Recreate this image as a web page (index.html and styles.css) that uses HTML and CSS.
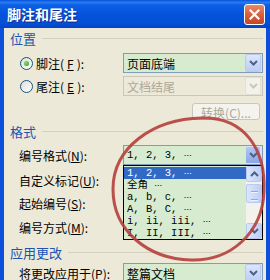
FILE: index.html
```html
<!DOCTYPE html>
<html lang="zh-CN">
<head>
  <meta charset="UTF-8" />
  <title>脚注和尾注</title>
  <link rel="stylesheet" href="styles.css">
</head>
<body>
  <div class="dialog">
    <div class="titlebar">
      <span class="title">脚注和尾注</span>
      <span class="close">
        <svg width="11" height="11" viewBox="0 0 11 11"><path d="M1.5 1.5l8 8M9.5 1.5l-8 8" stroke="#fff" stroke-width="2.2" stroke-linecap="square"/></svg>
      </span>
    </div>

    <div class="content">
      <div class="group first">位置</div>
      <div class="row row-foot">
        <label class="radio"><span class="dot checked"></span>脚注(<u>F</u>):</label>
        <div class="combo">
          <span class="value">页面底端</span>
          <span class="arrow"><svg width="9" height="6" viewBox="0 0 9 6"><path d="M1 1l3.5 3.5L8 1" stroke="#4d6185" stroke-width="2" fill="none"/></svg></span>
        </div>
      </div>
      <div class="row row-end">
        <label class="radio"><span class="dot"></span>尾注(<u>E</u>):</label>
        <div class="combo disabled">
          <span class="value">文档结尾</span>
          <span class="arrow"><svg width="9" height="6" viewBox="0 0 9 6"><path d="M1 1l3.5 3.5L8 1" stroke="#c9c7ba" stroke-width="2" fill="none"/></svg></span>
        </div>
      </div>
      <div class="actions">
        <button class="btn" disabled>转换(<u>C</u>)...</button>
      </div>

      <div class="group">格式</div>
      <div class="row row-format">
        <label>编号格式(<u>N</u>):</label>
        <div class="combo">
          <span class="value num">1, 2, 3, <span class="ell">…</span></span>
          <span class="arrow hot"><svg width="9" height="6" viewBox="0 0 9 6"><path d="M1 1l3.5 3.5L8 1" stroke="#4d6185" stroke-width="2" fill="none"/></svg></span>
        </div>
      </div>
      <div class="row row-custom"><label>自定义标记(<u>U</u>):</label></div>
      <div class="row row-start"><label>起始编号(<u>S</u>):</label></div>
      <div class="row row-mode"><label>编号方式(<u>M</u>):</label></div>

      <div class="group group-apply">应用更改</div>
      <div class="row row-apply">
        <label>将更改应用于(<u>P</u>):</label>
        <div class="combo">
          <span class="value">整篇文档</span>
          <span class="arrow"><svg width="9" height="6" viewBox="0 0 9 6"><path d="M1 1l3.5 3.5L8 1" stroke="#4d6185" stroke-width="2" fill="none"/></svg></span>
        </div>
      </div>
    </div>

    <div class="droplist">
      <ul class="items num">
        <li class="selected">1, 2, 3, <span class="ell">…</span></li>
        <li>全角 <span class="ell">…</span></li>
        <li>a, b, c, <span class="ell">…</span></li>
        <li>A, B, C, <span class="ell">…</span></li>
        <li>i, ii, iii, <span class="ell">…</span></li>
        <li>I, II, III, <span class="ell">…</span></li>
      </ul>
      <div class="scrollbar">
        <span class="sbtn"><svg width="9" height="6" viewBox="0 0 9 6"><path d="M1 5l3.5-3.5L8 5" stroke="#4d6185" stroke-width="2" fill="none"/></svg></span>
        <span class="track"><span class="thumb"></span></span>
        <span class="sbtn"><svg width="9" height="6" viewBox="0 0 9 6"><path d="M1 1l3.5 3.5L8 1" stroke="#4d6185" stroke-width="2" fill="none"/></svg></span>
      </div>
    </div>

    <svg class="mark" width="270" height="280" viewBox="0 0 270 280">
      <path d="M202 118 C245 117 266 150 264 192 C262 233 231 261 191 260 C149 259 113 232 113 189 C113 148 152 119 202 118 Z" fill="none" stroke="#b63f3b" stroke-width="3" stroke-opacity="0.9"/>
    </svg>
  </div>
</body>
</html>
```

FILE: styles.css
```css
body {
  margin: 0;
  font-family: "Noto Sans CJK SC", sans-serif;
  font-size: 12px;
  color: #000;
}
.dialog {
  position: relative;
  width: 270px;
  height: 280px;
  overflow: hidden;
  background: #ece9d8;
}
.titlebar {
  height: 28px;
  display: flex;
  align-items: center;
  justify-content: space-between;
  padding: 0 5px 0 7px;
  background: linear-gradient(to bottom, #0552dc 0%, #2a7cf0 8%, #0d5fe6 18%, #0453dc 50%, #044fd6 85%, #0342c2 100%);
}
.title {
  color: #fff;
  font-weight: bold;
  font-size: 14px;
  text-shadow: 1px 1px #0c2a8c;
}
.close {
  width: 19px;
  height: 19px;
  display: flex;
  align-items: center;
  justify-content: center;
  border: 1px solid #fff;
  border-radius: 3px;
  background: linear-gradient(to bottom, #e9896c, #d8603d 50%, #c2472a);
}
.content {
  height: 252px;
  padding: 2px 3px 0 6px;
  border-left: 4px solid #0b4fdb;
  border-right: 4px solid #0b4fdb;
}
.group {
  height: 15px;
  margin-top: 4px;
  display: flex;
  align-items: center;
  gap: 6px;
  color: #2052b4;
  font-size: 13px;
}
.group::after {
  content: "";
  flex: 1;
  border-top: 1px solid #d3d0c0;
}
.group.first {
  margin-top: 1px;
}
.row {
  height: 20px;
  margin-left: 9px;
  display: grid;
  grid-template-columns: 1fr 140px;
  align-items: center;
}
.row-foot { margin-top: 7px; }
.row-end { margin-top: 3px; }
.row-format { margin-top: 6px; }
.row-custom { margin-top: 5px; }
.row-start { margin-top: 3px; }
.row-mode { margin-top: 4px; }
.group-apply { margin-top: 8px; }
.row-apply { margin-top: 3px; }

.radio {
  display: flex;
  align-items: center;
  gap: 3px;
}
.dot {
  width: 11px;
  height: 11px;
  margin-left: 1px;
  border: 1px solid #1c5180;
  border-radius: 50%;
  background: linear-gradient(135deg, #dcdcd7, #ffffff);
  display: flex;
  align-items: center;
  justify-content: center;
}
.dot.checked::after {
  content: "";
  width: 5px;
  height: 5px;
  border-radius: 50%;
  background: radial-gradient(circle at 35% 35%, #7ee07a, #21a121);
}
.combo {
  height: 20px;
  box-sizing: border-box;
  border: 1px solid #7f9db9;
  background: #d6ebd0;
  display: flex;
  align-items: center;
  justify-content: space-between;
  padding: 0 1px 0 3px;
}
.combo.disabled {
  background: #ece9d8;
  border-color: #c9c7ba;
  color: #aca899;
}
.arrow {
  width: 14px;
  height: 16px;
  border: 1px solid #b9caf1;
  border-radius: 2px;
  background: linear-gradient(to bottom, #dce6fc, #bccdf6);
  display: flex;
  align-items: center;
  justify-content: center;
}
.arrow.hot {
  background: linear-gradient(to bottom, #b4c8f6, #8aa6e6);
  border-color: #d8e2fb;
}
.combo.disabled .arrow {
  background: #f2f1ea;
  border-color: #e2e0d6;
}
.actions {
  margin-top: 7px;
  display: flex;
  justify-content: flex-end;
  padding-right: 3px;
}
.btn {
  width: 68px;
  height: 17px;
  padding: 0;
  font: inherit;
  white-space: nowrap;
  color: #aca899;
  background: #f4f3ee;
  border: 1px solid #c9c7ba;
  border-radius: 3px;
}
.num {
  font-family: "Liberation Mono", "Noto Sans CJK SC", monospace;
  font-size: 10.5px;
}
.ell {
  font-family: "Noto Sans CJK SC", sans-serif;
  font-size: 8px;
  vertical-align: -0.6px;
}
.droplist {
  position: absolute;
  left: 123px;
  top: 165px;
  width: 138px;
  height: 73px;
  border: 1px solid #000;
  background: #d6ebd0;
  display: flex;
}
.items {
  flex: 1;
  margin: 0;
  padding: 1px 0 0;
  list-style: none;
}
.items li {
  height: 12px;
  line-height: 12px;
  padding-left: 3px;
  white-space: nowrap;
}
.items li.selected {
  background: #316ac5;
  color: #fff;
}
.scrollbar {
  width: 16px;
  display: flex;
  flex-direction: column;
  background: #f3f2ec;
}
.sbtn {
  height: 14px;
  border: 1px solid #b9caf1;
  border-radius: 2px;
  background: linear-gradient(to right, #dce6fc, #bccdf6);
  display: flex;
  align-items: center;
  justify-content: center;
}
.track {
  flex: 1;
}
.thumb {
  display: block;
  height: 17px;
  margin-top: 2px;
  border: 1px solid #b9caf1;
  border-radius: 2px;
  background: repeating-linear-gradient(to bottom, transparent 0 6px, #8fa7e0 6px 7px, #eef3fd 7px 8px) center / 7px 100% no-repeat, linear-gradient(to right, #dce6fc, #bccdf6);
}
.mark {
  position: absolute;
  left: 0;
  top: 0;
  pointer-events: none;
}
```
